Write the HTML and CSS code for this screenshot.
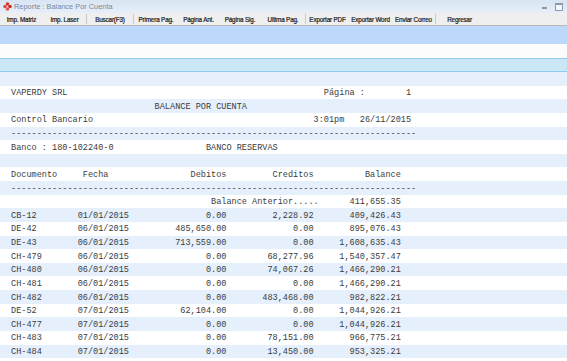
FILE: index.html
```html
<!DOCTYPE html>
<html lang="es">
<head>
    <meta charset="UTF-8">
    <title>Reporte : Balance Por Cuenta</title>
    <link rel="stylesheet" href="styles.css">
</head>
<body>
    <!-- Barra de titulo -->
    <div class="titlebar">
        <svg class="app-icon" width="9" height="9" viewBox="0 0 9 9">
            <circle cx="4.5" cy="2" r="1.8" fill="#d9342b"/>
            <circle cx="2" cy="4.5" r="1.8" fill="#e0493f"/>
            <circle cx="7" cy="4.5" r="1.8" fill="#c9281f"/>
            <circle cx="4.5" cy="7" r="1.8" fill="#e25a4f"/>
        </svg>
        <span class="title">Reporte : Balance Por Cuenta</span>
        <div class="win-controls">
            <span class="win-min"></span>
            <span class="win-max"></span>
        </div>
    </div>

    <!-- Barra de botones -->
    <div class="toolbar">
        <span class="tb-btn w43">Imp. Matriz</span>
        <span class="tb-btn w43">Imp. Laser</span>
        <span class="tb-sep"></span>
        <span class="tb-btn w46">Buscar(F3)</span>
        <span class="tb-sep"></span>
        <span class="tb-btn w44">Primera Pag.</span>
        <span class="tb-btn w41">Página Ant.</span>
        <span class="tb-btn w42">Página Sig.</span>
        <span class="tb-btn w44">Ultima Pag.</span>
        <span class="tb-sep"></span>
        <span class="tb-btn w43">Exportar PDF</span>
        <span class="tb-btn w43">Exportar Word</span>
        <span class="tb-btn w43">Enviar Correo</span>
        <span class="tb-sep"></span>
        <span class="tb-btn w47">Regresar</span>
    </div>

    <div class="band"></div>
    <div class="gap"></div>
    <div class="searchbar"></div>

    <!-- Contenido del reporte -->
    <div class="report" id="report"></div>

    <script>
        const dashes = '-'.repeat(79);
        const lines = [
            '',
            'VAPERDY SRL'.padEnd(61) + 'Página :'.padEnd(16) + '1',
            ' '.repeat(28) + 'BALANCE POR CUENTA',
            'Control Bancario'.padEnd(59) + '3:01pm   26/11/2015',
            dashes,
            'Banco : 180-102240-0'.padEnd(38) + 'BANCO RESERVAS',
            '',
            'Documento'.padEnd(14) + 'Fecha'.padEnd(21) + 'Debitos'.padEnd(16) + 'Creditos'.padEnd(18) + 'Balance',
            dashes,
            ' '.repeat(39) + 'Balance Anterior.....' + '411,655.35'.padStart(16)
        ];

        const movimientos = [
            ['CB-12', '01/01/2015', '0.00', '2,228.92', '409,426.43'],
            ['DE-42', '06/01/2015', '485,650.00', '0.00', '895,076.43'],
            ['DE-43', '06/01/2015', '713,559.00', '0.00', '1,608,635.43'],
            ['CH-479', '06/01/2015', '0.00', '68,277.96', '1,540,357.47'],
            ['CH-480', '06/01/2015', '0.00', '74,067.26', '1,466,290.21'],
            ['CH-481', '06/01/2015', '0.00', '0.00', '1,466,290.21'],
            ['CH-482', '06/01/2015', '0.00', '483,468.00', '982,822.21'],
            ['DE-52', '07/01/2015', '62,104.00', '0.00', '1,044,926.21'],
            ['CH-477', '07/01/2015', '0.00', '0.00', '1,044,926.21'],
            ['CH-483', '07/01/2015', '0.00', '78,151.00', '966,775.21'],
            ['CH-484', '07/01/2015', '0.00', '13,450.00', '953,325.21']
        ];

        movimientos.forEach(function (m) {
            lines.push(m[0].padEnd(13) + m[1] + m[2].padStart(19) + m[3].padStart(17) + m[4].padStart(17));
        });
        lines.push('');

        const report = document.getElementById('report');
        lines.forEach(function (text) {
            const div = document.createElement('div');
            div.className = 'line';
            div.textContent = text;
            report.appendChild(div);
        });
    </script>
</body>
</html>
```

FILE: styles.css
```css
body {
    margin: 0;
    padding: 0;
    background-color: #ffffff;
    overflow: hidden;
    font-family: "Liberation Sans", Arial, sans-serif;
}
.titlebar {
    height: 13px;
    display: flex;
    align-items: center;
    background: linear-gradient(#d9e5f4, #e6eef9);
    padding-left: 3px;
}
.app-icon {
    margin-right: 2px;
}
.title {
    font-size: 7.4px;
    color: #7b8798;
}
.win-controls {
    margin-left: auto;
    display: flex;
    align-items: center;
    gap: 8px;
    padding-right: 4px;
}
.win-min {
    width: 5px;
    height: 2px;
    background: #8e99a8;
    margin-top: 3px;
}
.win-max {
    width: 6px;
    height: 5px;
    border: 1px solid #8e99a8;
    border-top-width: 2px;
    background: #f4f7fb;
}
.toolbar {
    height: 12px;
    display: flex;
    align-items: center;
    background-color: #efefef;
    border-bottom: 1px solid #b9b9b9;
}
.tb-btn {
    font-size: 6.3px;
    letter-spacing: -0.15px;
    color: #1a1a1a;
    text-align: center;
    white-space: nowrap;
    -webkit-text-stroke: 0.2px #1a1a1a;
}
.w41 { width: 41px; }
.w42 { width: 42px; }
.w43 { width: 43px; }
.w44 { width: 44px; }
.w46 { width: 46px; }
.w47 { width: 47px; }
.tb-sep {
    width: 1px;
    height: 10px;
    background-color: #c8c8c8;
}
.band {
    height: 18px;
    background-color: #bcd9fc;
}
.gap {
    height: 14px;
    background-color: #fcfcfc;
}
.searchbar {
    height: 12px;
    background-color: #cbe6f5;
    border-top: 1px solid #8ecbee;
    border-bottom: 1px solid #8ecbee;
}
.report {
    font-family: "Liberation Mono", "Courier New", monospace;
    font-size: 8.56px;
    color: #3c3c3c;
}
.line {
    height: 12.13px;
    padding-top: 1.5px;
    line-height: 13.63px;
    padding-left: 11px;
    white-space: pre;
    background-color: #ffffff;
}
.line:nth-child(odd) {
    background-color: #e6f0fc;
}
```
